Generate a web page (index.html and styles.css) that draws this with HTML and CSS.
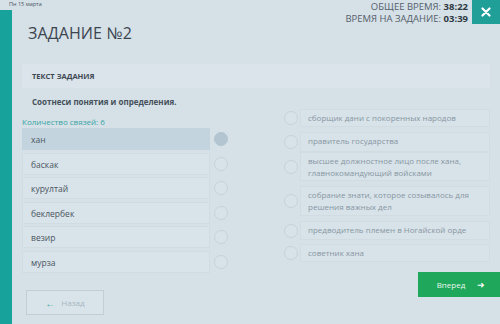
FILE: index.html
```html
<!DOCTYPE html>
<html lang="ru">
<head>
<meta charset="utf-8">
<link rel="stylesheet" href="styles.css">
</head>
<body>
<div class="page">
  <div class="status">Пн 15 марта</div>
  <aside class="sidebar"></aside>
  <h1 class="title">ЗАДАНИЕ №2</h1>
  <div class="timers">
    <div class="times">
      <div>ОБЩЕЕ ВРЕМЯ: <b>38:22</b></div>
      <div>ВРЕМЯ НА ЗАДАНИЕ: <b>03:39</b></div>
    </div>
    <button class="close" aria-label="Закрыть">
      <svg width="10" height="10" viewBox="0 0 10 10"><path d="M1.5 1.5 L8.5 8.5 M8.5 1.5 L1.5 8.5" stroke="#fff" stroke-width="2.2" stroke-linecap="round"/></svg>
    </button>
  </div>
  <main class="content">
    <div class="task-head">ТЕКСТ ЗАДАНИЯ</div>
    <p class="task-text">Соотнеси понятия и определения.</p>
    <div class="match">
      <div class="col-left">
        <div class="count">Количество связей: 6</div>
        <div class="lrow"><div class="lbox active">хан</div><span class="dot filled"></span></div>
        <div class="lrow"><div class="lbox">баскак</div><span class="dot"></span></div>
        <div class="lrow"><div class="lbox">курултай</div><span class="dot"></span></div>
        <div class="lrow"><div class="lbox">беклербек</div><span class="dot"></span></div>
        <div class="lrow"><div class="lbox">везир</div><span class="dot"></span></div>
        <div class="lrow"><div class="lbox">мурза</div><span class="dot"></span></div>
      </div>
      <div class="col-right">
        <div class="rrow r1"><span class="dot"></span><div class="rbox">сборщик дани с покоренных народов</div></div>
        <div class="rrow r2"><span class="dot"></span><div class="rbox">правитель государства</div></div>
        <div class="rrow r3"><span class="dot"></span><div class="rbox">высшее должностное лицо после хана,<br>главнокомандующий войсками</div></div>
        <div class="rrow r4"><span class="dot"></span><div class="rbox">собрание знати, которое созывалось для<br>решения важных дел</div></div>
        <div class="rrow r5"><span class="dot"></span><div class="rbox">предводитель племен в Ногайской орде</div></div>
        <div class="rrow r6"><span class="dot"></span><div class="rbox">советник хана</div></div>
      </div>
    </div>
    <div class="nav">
      <button class="back"><span class="arr">&#8592;</span>Назад</button>
      <button class="next">Вперед<span class="arr">&#10140;</span></button>
    </div>
  </main>
</div>
</body>
</html>
```
FILE: styles.css
```css
* { box-sizing: border-box; }
html, body { margin: 0; padding: 0; }
body {
  width: 500px;
  height: 324px;
  overflow: hidden;
  background: #d5e0e7;
  font-family: "Open Sans", "Noto Sans", sans-serif;
  color: #4a5560;
}
.page {
  display: grid;
  grid-template-columns: 12px 1fr auto;
  grid-template-rows: 10px 40px 1fr;
  height: 324px;
}
.status {
  grid-row: 1;
  grid-column: 1 / 3;
  font-size: 5.5px;
  line-height: 8px;
  padding-left: 9px;
  color: #4b5560;
}
.sidebar {
  grid-row: 2 / 4;
  grid-column: 1;
  background: #17a39b;
}
.title {
  grid-row: 2;
  grid-column: 2;
  margin: 0;
  padding: 12px 0 0 16px;
  font-size: 16px;
  font-weight: 400;
  color: #3c4550;
  letter-spacing: 0.1px;
}
.timers {
  grid-row: 1 / 3;
  grid-column: 3;
  display: flex;
  align-items: flex-start;
  gap: 4px;
}
.times {
  padding-top: 1px;
  text-align: right;
  font-size: 9.5px;
  line-height: 12px;
  color: #56616b;
}
.times b { color: #2f3a44; font-weight: 700; }
.close {
  width: 28px;
  height: 24px;
  border: 0;
  padding: 0;
  background: #1f9f98;
  display: flex;
  align-items: center;
  justify-content: center;
}
.content {
  grid-row: 3;
  grid-column: 2 / 4;
  padding: 14px 10px 0 10px;
  display: flex;
  flex-direction: column;
}
.task-head {
  height: 24px;
  background: #dbe4ea;
  font-size: 7.5px;
  font-weight: 700;
  line-height: 24px;
  padding-left: 10px;
  color: #3e4852;
}
.task-text {
  margin: 0;
  padding: 8px 0 0 10px;
  height: 21px;
  font-size: 8px;
  font-weight: 700;
  color: #45505a;
}
.match {
  display: flex;
  justify-content: space-between;
}
.col-left {
  width: 206px;
  padding-top: 8px;
  display: flex;
  flex-direction: column;
}
.count {
  font-size: 8px;
  color: #3aa5a5;
  line-height: 10px;
  height: 10px;
}
.lrow {
  display: flex;
  align-items: center;
  justify-content: space-between;
  height: 24.5px;
}
.lbox {
  width: 188px;
  height: 22px;
  line-height: 22px;
  padding-left: 8px;
  font-size: 8.5px;
  color: #4a5560;
  background: #d9e3ea;
  border: 1px solid #d0dbe2;
}
.lbox.active { background: #c3d4df; border-color: #c3d4df; }
.dot {
  width: 14px;
  height: 14px;
  border-radius: 50%;
  border: 1.5px solid #c6d3db;
  background: #d8e2e9;
  flex: none;
}
.dot.filled { background: #b3c5d0; border-color: #b3c5d0; }
.col-right {
  width: 206px;
  display: flex;
  flex-direction: column;
}
.rrow {
  display: flex;
  align-items: center;
  gap: 2px;
}
.rbox {
  flex: 1;
  padding: 2px 7px;
  font-size: 8px;
  line-height: 12px;
  color: #8797a2;
  border: 1px solid #d0dbe2;
  background: #d8e2e9;
}
.r1 .rbox { height: 18px; }
.r2 { margin-top: 5px; }
.r2 .rbox { height: 20px; }
.r3 .rbox { height: 29px; }
.r4 { margin-top: 5px; }
.r4 .rbox { height: 30px; }
.r5 { margin-top: 5px; }
.r5 .rbox { height: 19px; }
.r6 { margin-top: 4px; }
.r6 .rbox { height: 18px; }
.nav {
  display: flex;
  justify-content: space-between;
  align-items: flex-start;
  margin-top: -2px;
  margin-right: -10px;
}
.back {
  margin-top: 18px;
  margin-left: 4px;
  width: 78px;
  height: 25px;
  border: 1px solid #c2ced6;
  background: #d9e3ea;
  font-family: inherit;
  font-size: 8px;
  color: #a6b7c0;
  display: flex;
  align-items: center;
  justify-content: center;
  gap: 6px;
  padding: 0;
}
.back .arr { color: #2ea69a; font-size: 10px; font-weight: 700; }
.next {
  width: 82px;
  height: 25px;
  border: 0;
  background: #1fa85b;
  color: #eaf7ef;
  font-family: inherit;
  font-size: 8px;
  display: flex;
  align-items: center;
  justify-content: center;
  gap: 12px;
  padding: 0 0 0 4px;
}
.next .arr { color: #fff; font-size: 9px; }
```
